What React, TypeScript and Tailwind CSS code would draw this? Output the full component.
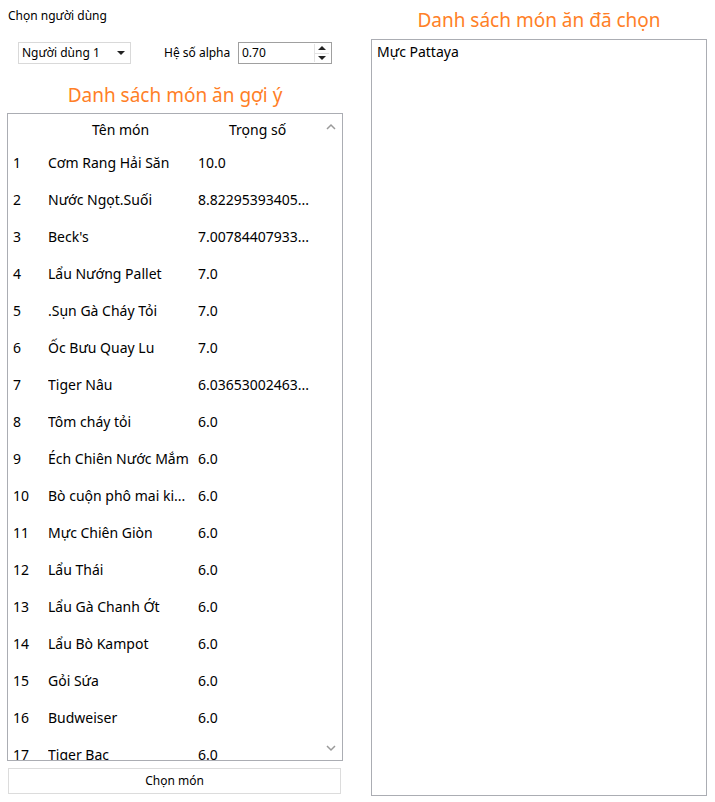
import React from "react";

const foods: [string, string][] = [
  ["Cơm Rang Hải Săn", "10.0"],
  ["Nước Ngọt.Suối", "8.82295393405..."],
  ["Beck's", "7.00784407933..."],
  ["Lẩu Nướng Pallet", "7.0"],
  [".Sụn Gà Cháy Tỏi", "7.0"],
  ["Ốc Bưu Quay Lu", "7.0"],
  ["Tiger Nâu", "6.03653002463..."],
  ["Tôm cháy tỏi", "6.0"],
  ["Éch Chiên Nước Mắm", "6.0"],
  ["Bò cuộn phô mai ki...", "6.0"],
  ["Mực Chiên Giòn", "6.0"],
  ["Lẩu Thái", "6.0"],
  ["Lẩu Gà Chanh Ớt", "6.0"],
  ["Lẩu Bò Kampot", "6.0"],
  ["Gỏi Sứa", "6.0"],
  ["Budweiser", "6.0"],
  ["Tiger Bạc", "6.0"],
];

function Chevron({ up }: { up?: boolean }) {
  return (
    <svg width="10" height="7" viewBox="0 0 10 7" className="block">
      <path
        d={up ? "M1 6 L5 2 L9 6" : "M1 1 L5 5 L9 1"}
        fill="none"
        stroke="#9a9a9a"
        strokeWidth="1.5"
      />
    </svg>
  );
}

export default function App() {
  return (
    <div className="flex h-[802px] w-[715px] overflow-hidden bg-white text-black [font-family:'Noto_Sans',sans-serif]">
      {/* left side */}
      <div className="flex w-[343px] flex-col pl-[7px]">
        <div className="h-[32px] pl-[1px] pt-[8px] text-[12px] leading-[16px]">Chọn người dùng</div>

        <div className="mt-[10px] flex h-[22px] items-center text-[12px]">
          <div className="ml-[11px] flex h-[22px] w-[113px] items-center justify-between border border-[#d9d9d9] pl-[3px] pr-[5px]">
            <span>Người dùng 1</span>
            <svg width="8" height="4" viewBox="0 0 8 4">
              <path d="M0 0 L8 0 L4 4 Z" fill="#222" />
            </svg>
          </div>
          <span className="ml-[33px] w-[74px]">Hệ số alpha</span>
          <div className="flex h-[22px] w-[94px] items-center justify-between border border-[#a0a0a0] pl-[3px] pr-[2px]">
            <span>0.70</span>
            <div className="flex h-[18px] w-[15px] flex-col border-l border-[#e3e3e3]">
              <div className="flex flex-1 items-center justify-center border-b border-[#e3e3e3]">
                <svg width="8" height="4" viewBox="0 0 8 4">
                  <path d="M0 4 L8 4 L4 0 Z" fill="#222" />
                </svg>
              </div>
              <div className="flex flex-1 items-center justify-center">
                <svg width="8" height="4" viewBox="0 0 8 4">
                  <path d="M0 0 L8 0 L4 4 Z" fill="#222" />
                </svg>
              </div>
            </div>
          </div>
        </div>

        <div className="h-[49px] pt-[18px] text-center text-[19px] leading-[27px] text-[#ff7f27]">
          Danh sách món ăn gợi ý
        </div>

        <div className="relative h-[648px] w-[336px] overflow-hidden border border-[#abadb3] text-[14px]">
          <div className="flex h-[30px] items-center">
            <div className="w-[40px]" />
            <div className="w-[150px] pl-[44px]">Tên món</div>
            <div className="pl-[31px]">Trọng số</div>
          </div>
          {foods.map(([name, score], i) => (
            <div key={i} className="flex h-[37px] items-center whitespace-nowrap">
              <div className="w-[40px] pl-[5px]">{i + 1}</div>
              <div className="w-[150px] overflow-hidden">{name}</div>
              <div className="w-[120px] overflow-hidden">{score}</div>
            </div>
          ))}
          <div className="absolute right-[6px] top-[9px]">
            <Chevron up />
          </div>
          <div className="absolute bottom-[8px] right-[6px]">
            <Chevron />
          </div>
        </div>

        <button className="ml-[1px] mt-[7px] h-[26px] w-[333px] border border-[#dcdcdc] bg-white text-[12px]">
          Chọn món
        </button>
      </div>

      {/* right side */}
      <div className="ml-[28px] flex w-[336px] flex-col">
        <div className="h-[39px] pt-[7px] text-center text-[19px] leading-[27px] text-[#ff7f27]">
          Danh sách món ăn đã chọn
        </div>
        <div className="h-[757px] border border-[#abadb3] pl-[5px] pt-[2px] text-[14px] leading-[20px]">
          Mực Pattaya
        </div>
      </div>
    </div>
  );
}
